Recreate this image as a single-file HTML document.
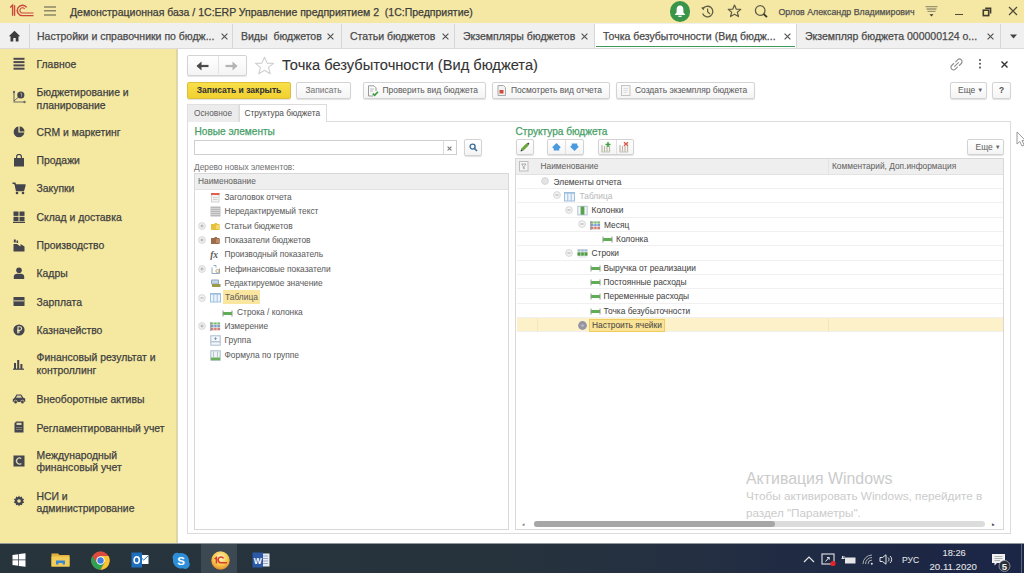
<!DOCTYPE html>
<html><head><meta charset="utf-8">
<style>
*{box-sizing:border-box}
html,body{margin:0;padding:0}
body{width:1024px;height:573px;position:relative;overflow:hidden;background:#fff;font-family:"Liberation Sans",sans-serif;color:#4a4a4a}
.a{position:absolute;white-space:nowrap}
body *{-webkit-text-stroke:0.05px currentColor}
.si,.tab,.ttl,.grn{-webkit-text-stroke:0.25px currentColor}
#tb{left:0;top:0;width:1024px;height:23px;background:#f5e8a4}
#tabs{left:0;top:23px;width:1024px;height:26px;background:#f0f0f0;border-bottom:1px solid #dadada}
.tab{top:24px;height:24px;border-right:1px solid #d6d6d6;font-size:10.5px;line-height:25px;color:#4a4a4a}
#side{left:0;top:49px;width:178px;height:494px;background:#f5e9a2;border-right:2px solid #dcd6a8}
.si{left:36.5px;font-size:10.4px;line-height:12.5px;color:#3f3f3f}

.btn{height:16.5px;border:1px solid #d3d3d3;border-radius:2px;background:linear-gradient(#ffffff,#f4f4f4);box-shadow:0 1px 1px rgba(0,0,0,.12);font-size:8.45px;line-height:14.5px;color:#606060}
.ybtn{background:linear-gradient(#f8df4a,#f1d030);border-color:#dcc038;color:#333;font-weight:bold}
.ftab{font-size:8.3px;line-height:16px;color:#666}

.grn{font-size:10.1px;line-height:12px;color:#47a066}
.tr{font-size:8.4px;line-height:14.35px;height:14.35px;color:#5e5e5e}
.tr *,.hd,.btn,.ftab{-webkit-text-stroke:0.05px currentColor}
.hd{font-size:8.35px;line-height:14.6px;color:#666}
.ex{width:6px;height:6px;border-radius:50%;border:1px solid #dcdcdc;background:#f6f6f6}
#rtree .tr{color:#474747}
#task{left:0;top:543px;width:1024px;height:30px;background:linear-gradient(90deg,#27343c 0%,#26333d 50%,#242f42 68%,#1f2a44 80%,#1b2546 100%);background-clip:padding-box;border-top:1px solid rgba(40,50,60,.5)}
</style></head><body>
<svg width="0" height="0" style="position:absolute">
<symbol id="ic-hdr" viewBox="0 0 11 11"><rect x="1.5" y="1.5" width="7.5" height="8.5" fill="#f3f3f3" stroke="#d2d2d2" stroke-width="1"/><rect x="1" y="1" width="8.5" height="2" fill="#e2604e"/><path d="M3 5.5H7.5M3 7.5H7.5" stroke="#c8c8c8" stroke-width=".8"/></symbol>
<symbol id="ic-txt" viewBox="0 0 11 11"><rect x="0.5" y="0.5" width="10" height="10" fill="#b9b9b9"/><path d="M0.5 2.5H10.5M0.5 4.5H10.5M0.5 6.5H10.5M0.5 8.5H10.5" stroke="#dcdcdc" stroke-width=".8"/></symbol>
<symbol id="ic-yel" viewBox="0 0 11 11"><path d="M1 3H4L5 2H7V3H9.5V9H1Z" fill="#e8c13c"/><rect x="6" y="4" width="4" height="4" fill="#f3d872"/></symbol>
<symbol id="ic-brn" viewBox="0 0 11 11"><path d="M1 3H4L5 2H7V3H9.5V9H1Z" fill="#9e6a4c"/><rect x="6" y="4" width="4" height="4" fill="#b98a6a"/></symbol>
<symbol id="ic-fx" viewBox="0 0 11 11"><text x="0.2" y="9" font-family="Liberation Serif" font-style="italic" font-weight="bold" font-size="9.5" fill="#5a5a5a">fx</text></symbol>
<symbol id="ic-nf" viewBox="0 0 11 11"><path d="M2 3.5V9.5H9.5V4.5" fill="none" stroke="#8fa9c2" stroke-width="1"/><path d="M3.5 1.5H6V3.5" fill="none" stroke="#8fa9c2" stroke-width="1"/><circle cx="7.5" cy="7" r="1.6" fill="none" stroke="#c0a060" stroke-width=".9"/></symbol>
<symbol id="ic-ed" viewBox="0 0 11 11"><rect x="1" y="1.5" width="8" height="5" rx="1" fill="#8da8c4"/><rect x="2" y="2.5" width="6" height="3" fill="#c7d6e6"/><rect x="2" y="6" width="8.5" height="3" fill="#9a9a4a"/></symbol>
<symbol id="ic-tbl" viewBox="0 0 11 11"><rect x="0.5" y="1.5" width="10" height="8.5" fill="#eef4fb" stroke="#9dbfdf" stroke-width="1"/><path d="M3.8 1.5V10M7.2 1.5V10" stroke="#9dbfdf" stroke-width="1"/><path d="M0.5 2H10.5" stroke="#9dbfdf" stroke-width="1.4"/></symbol>
<symbol id="ic-row" viewBox="0 0 11 11"><rect x="1" y="4" width="9" height="3" fill="#5fae55"/><path d="M1 2.5V8.5M10 2.5V8.5" stroke="#8a9a88" stroke-width="1"/></symbol>
<symbol id="ic-dim" viewBox="0 0 11 11"><rect x="0.5" y="1" width="10" height="9" fill="#eef0f4"/><rect x="1" y="1.5" width="9" height="2" fill="#7cba6a"/><rect x="1" y="4" width="9" height="2.2" fill="#7a9ed0"/><rect x="1" y="6.8" width="9" height="2.4" fill="#d87a70"/><path d="M3.8 1V10M7 1V10" stroke="#e8ecf0" stroke-width=".8"/><path d="M0.8 1V10" stroke="#8a8a90" stroke-width="1"/></symbol>
<symbol id="ic-grp" viewBox="0 0 11 11"><rect x="0.8" y="0.8" width="9.4" height="9.4" fill="#f4f7fa" stroke="#a9bccf" stroke-width="1"/><path d="M0.8 6.8H10.2" stroke="#a9bccf" stroke-width="1.2"/><path d="M5.5 2.3V5M4.2 3.6H6.8" stroke="#7890a8" stroke-width=".9"/></symbol>
<symbol id="ic-frm" viewBox="0 0 11 11"><rect x="0.8" y="0.8" width="9.4" height="9.4" fill="#eef3f6" stroke="#a9bccf" stroke-width="1"/><rect x="1" y="7.5" width="9" height="2.7" fill="#6cb05a"/><path d="M3.5 1.5V7.5M7.5 1.5V7.5" stroke="#b8c4cc" stroke-width="1"/></symbol>
<symbol id="ic-col" viewBox="0 0 11 11"><rect x="0.8" y="1.3" width="9.4" height="8.6" fill="#f2f5f9" stroke="#b4c4d6" stroke-width="1"/><rect x="3.6" y="1.5" width="3.8" height="8.2" fill="#5aa24a"/></symbol>
<symbol id="ic-rows" viewBox="0 0 11 11"><rect x="0.5" y="1.3" width="10" height="8.6" fill="#eef2f6"/><rect x="0.5" y="1.3" width="10" height="2.2" fill="#a8bcd0"/><rect x="0.5" y="4.3" width="10" height="3.4" fill="#4f9a40"/><path d="M3.8 1.3V9.9M7.2 1.3V9.9" stroke="#dfe6ee" stroke-width=".7"/></symbol>
<symbol id="ic-gear" viewBox="0 0 11 11"><circle cx="5.5" cy="5.5" r="4.4" fill="#9595a2"/><circle cx="5.5" cy="5.5" r="1.6" fill="#b4b4be"/></symbol>
<symbol id="exm" viewBox="0 0 8 8"><circle cx="4" cy="4" r="3.4" fill="#f3f3f3" stroke="#d4d4d4" stroke-width="0.9"/><path d="M2.3 4H5.7" stroke="#a8a8a8" stroke-width="0.9"/></symbol>
<symbol id="exp" viewBox="0 0 8 8"><circle cx="4" cy="4" r="3.4" fill="#f3f3f3" stroke="#d4d4d4" stroke-width="0.9"/><path d="M2.3 4H5.7M4 2.3V5.7" stroke="#a8a8a8" stroke-width="0.9"/></symbol>
<symbol id="exd" viewBox="0 0 8 8"><circle cx="4" cy="4" r="3.4" fill="#e4e4e4" stroke="#d4d4d4" stroke-width="0.9"/></symbol>
</svg>

<!-- title bar -->
<div class="a" id="tb"></div>
<div class="a ttl" style="left:70px;top:6px;font-size:10.5px;line-height:13px;color:#3c3c3c">Демонстрационная база / 1С:ERP Управление предприятием 2&nbsp; (1С:Предприятие)</div>

<svg class="a" style="left:8px;top:3px" width="28" height="16" viewBox="0 0 28 16">
<path d="M2.2 4.6L4.6 2.2V12.8" fill="none" stroke="#c9473b" stroke-width="1.4"/><path d="M6.6 2.2V12.8" stroke="#c9473b" stroke-width="1.3"/>
<path d="M18.7 4.4A5.2 5.2 0 1 0 14.4 12.6H25.5" fill="none" stroke="#c9473b" stroke-width="1.4"/>
<path d="M16.6 5.9A2.6 2.6 0 1 0 14.4 10H25.5" fill="none" stroke="#c9473b" stroke-width="1.1"/>
</svg>
<svg class="a" style="left:44px;top:6px" width="12" height="10" viewBox="0 0 12 10"><path d="M0 1H12M0 4.8H12M0 9H12" stroke="#8d8765" stroke-width="1.5"/></svg>
<div class="a" style="left:669.5px;top:1px;width:20.5px;height:20.5px;border-radius:50%;background:#3a944a"></div>
<svg class="a" style="left:673px;top:4px" width="14" height="15" viewBox="0 0 14 15"><path d="M7 1.5C4.6 1.5 3.6 3.4 3.6 5.6V8.6L1.6 11H12.4L10.4 8.6V5.6C10.4 3.4 9.4 1.5 7 1.5Z" fill="#fff"/><path d="M5.3 12.3H8.7" stroke="#fff" stroke-width="1.2"/></svg>
<svg class="a" style="left:700px;top:4px" width="15" height="15" viewBox="0 0 15 15"><path d="M2.8 5.2A5.3 5.3 0 1 1 2.6 9.5" fill="none" stroke="#625c45" stroke-width="1.3"/><path d="M1 3.8L3.6 6.3L4.6 2.8Z" fill="#625c45"/><path d="M7.6 4.5V7.8L10 10" fill="none" stroke="#625c45" stroke-width="1.2"/></svg>
<svg class="a" style="left:727px;top:4px" width="15" height="14" viewBox="0 0 15 14"><path d="M7.5 1L9.3 5.2L13.8 5.4L10.3 8.2L11.5 12.6L7.5 10.2L3.5 12.6L4.7 8.2L1.2 5.4L5.7 5.2Z" fill="none" stroke="#625c45" stroke-width="1.2" stroke-linejoin="round"/></svg>
<svg class="a" style="left:754px;top:4px" width="15" height="15" viewBox="0 0 15 15"><circle cx="6.2" cy="6.5" r="4.8" fill="none" stroke="#625c45" stroke-width="1.3"/><path d="M9.6 10L13 13.2" stroke="#3a3628" stroke-width="1.8"/></svg>
<div class="a ttl" style="left:778.5px;top:7px;font-size:8.8px;line-height:10px;color:#505050">Орлов Александр Владимирович</div>
<svg class="a" style="left:925px;top:5px" width="13" height="13" viewBox="0 0 13 13"><path d="M0.5 1.7H12.5M1.5 4H11.5M2.5 6.3H10.5" stroke="#9c9472" stroke-width="1.3"/><path d="M4.5 9.2H8.5L6.5 11.6Z" fill="#3a3628"/></svg>
<div class="a" style="left:955px;top:13.5px;width:8px;height:1.8px;background:#4f4a38"></div>
<svg class="a" style="left:981.5px;top:7px" width="10" height="10" viewBox="0 0 10 10"><rect x="1.3" y="3.2" width="5.4" height="5.4" fill="none" stroke="#3f3b2d" stroke-width="1.6"/><path d="M3.2 1.3H8.6V6.6" fill="none" stroke="#3f3b2d" stroke-width="1.5"/></svg>
<svg class="a" style="left:1008px;top:6px" width="10" height="10" viewBox="0 0 10 10"><path d="M1 1L9 9M9 1L1 9" stroke="#4f4a38" stroke-width="1.2"/></svg>
<!-- tabs -->
<div class="a" id="tabs"></div>
<div class="a tab" style="left:0;width:30px"></div>
<div class="a tab" style="left:30px;width:203px;padding-left:7px">Настройки и справочники по бюдж...</div>
<div class="a tab" style="left:233px;width:109px;padding-left:8px">Виды&nbsp; бюджетов</div>
<div class="a tab" style="left:342px;width:113px;padding-left:8px">Статьи бюджетов</div>
<div class="a tab" style="left:455px;width:140px;padding-left:8px">Экземпляры бюджетов</div>
<div class="a tab" style="left:595px;width:202px;padding-left:8px;background:#fff">Точка безубыточности (Вид бюдж...</div>
<div class="a tab" style="left:797px;width:204px;padding-left:8px">Экземпляр бюджета 000000124 о...</div>

<svg class="a" style="left:8px;top:30px" width="13" height="12" viewBox="0 0 13 12"><path d="M6.5 0.8L0.8 6.2H2.5V11.5H5.3V8H7.7V11.5H10.5V6.2H12.2Z" fill="#3c3c3c"/></svg>
<div class="a" style="left:596px;top:45.5px;width:199px;height:1.8px;background:#3e9a5a"></div>
<svg class="a" style="left:220px;top:32px" width="9" height="9" viewBox="0 0 9 9"><path d="M1.6 1.6L7.4 7.4M7.4 1.6L1.6 7.4" stroke="#505050" stroke-width="1.1"/></svg>
<svg class="a" style="left:326px;top:32px" width="9" height="9" viewBox="0 0 9 9"><path d="M1.6 1.6L7.4 7.4M7.4 1.6L1.6 7.4" stroke="#505050" stroke-width="1.1"/></svg>
<svg class="a" style="left:440.5px;top:32px" width="9" height="9" viewBox="0 0 9 9"><path d="M1.6 1.6L7.4 7.4M7.4 1.6L1.6 7.4" stroke="#505050" stroke-width="1.1"/></svg>
<svg class="a" style="left:580px;top:32px" width="9" height="9" viewBox="0 0 9 9"><path d="M1.6 1.6L7.4 7.4M7.4 1.6L1.6 7.4" stroke="#505050" stroke-width="1.1"/></svg>
<svg class="a" style="left:783px;top:32px" width="9" height="9" viewBox="0 0 9 9"><path d="M1.6 1.6L7.4 7.4M7.4 1.6L1.6 7.4" stroke="#505050" stroke-width="1.1"/></svg>
<svg class="a" style="left:986px;top:32px" width="9" height="9" viewBox="0 0 9 9"><path d="M1.6 1.6L7.4 7.4M7.4 1.6L1.6 7.4" stroke="#505050" stroke-width="1.1"/></svg>
<svg class="a" style="left:1009px;top:33px" width="9" height="7" viewBox="0 0 9 7"><path d="M1 1.5H8L4.5 5.5Z" fill="#444"/></svg>
<!-- sidebar -->
<div class="a" id="side"></div>
<div class="a si" style="top:58.5px">Главное</div>
<div class="a si" style="top:87.0px;line-height:12.5px">Бюджетирование и<br>планирование</div>
<div class="a si" style="top:126.8px">CRM и маркетинг</div>
<div class="a si" style="top:154.8px">Продажи</div>
<div class="a si" style="top:183.0px">Закупки</div>
<div class="a si" style="top:211.8px">Склад и доставка</div>
<div class="a si" style="top:240.0px">Производство</div>
<div class="a si" style="top:268.2px">Кадры</div>
<div class="a si" style="top:296.7px">Зарплата</div>
<div class="a si" style="top:325.0px">Казначейство</div>
<div class="a si" style="top:352.2px;line-height:12.5px">Финансовый результат и<br>контроллинг</div>
<div class="a si" style="top:394.4px">Внеоборотные активы</div>
<div class="a si" style="top:422.7px">Регламентированный учет</div>
<div class="a si" style="top:449.8px;line-height:12.5px">Международный<br>финансовый учет</div>
<div class="a si" style="top:490.7px;line-height:12.5px">НСИ и<br>администрирование</div>


<svg class="a" style="left:13px;top:57px" width="12" height="13" viewBox="0 0 12 13" fill="#4a4a50"><rect x="0.5" y="0.8" width="11" height="2"/><rect x="0.5" y="4.1" width="11" height="2"/><rect x="0.5" y="7.4" width="11" height="2"/><rect x="0.5" y="10.7" width="11" height="2"/></svg>
<svg class="a" style="left:12px;top:90px" width="14" height="14" viewBox="0 0 14 14"><path d="M2 2V12H12.5" fill="none" stroke="#6a6a66" stroke-width="1.1"/><path d="M2 11L6 7.5" stroke="#6a6a66" stroke-width="1"/><circle cx="2" cy="2" r="1.2" fill="#6a6a66"/><circle cx="12.5" cy="12" r="1.2" fill="#6a6a66"/><circle cx="8.8" cy="5" r="3.6" fill="#45454d"/><path d="M8.2 3.2H9.6V6.8" stroke="#b8b49a" stroke-width=".8" fill="none"/></svg>
<svg class="a" style="left:13px;top:126px" width="12" height="12" viewBox="0 0 12 12"><path d="M5.4 0.6A5.4 5.4 0 1 0 11.4 6.6H5.4Z" fill="#45454d"/><path d="M6.6 0.5A4.9 4.9 0 0 1 11.5 5.4H6.6Z" fill="#45454d"/></svg>
<svg class="a" style="left:13px;top:154px" width="12" height="13" viewBox="0 0 12 13"><rect x="1" y="4" width="10" height="8.5" fill="#45454d"/><path d="M3.6 5.5V2.8A2.4 2.4 0 0 1 8.4 2.8V5.5" fill="none" stroke="#45454d" stroke-width="1.2"/></svg>
<svg class="a" style="left:12px;top:182px" width="14" height="13" viewBox="0 0 14 13"><path d="M0.5 1.2H3L4.5 8.5H11.5L13 3H3.5" fill="#45454d" stroke="#45454d" stroke-width="1.4" stroke-linejoin="round"/><circle cx="5" cy="11" r="1.3" fill="#45454d"/><circle cx="11" cy="11" r="1.3" fill="#45454d"/></svg>
<svg class="a" style="left:13px;top:211px" width="12" height="12" viewBox="0 0 12 12" fill="#45454d"><rect x="0.5" y="0.5" width="5" height="4.4"/><rect x="6.5" y="0.5" width="5" height="4.4"/><rect x="0.5" y="5.8" width="5" height="4.4"/><rect x="6.5" y="5.8" width="5" height="4.4"/><rect x="0" y="10.8" width="12" height="1.2"/></svg>
<svg class="a" style="left:13px;top:239px" width="12" height="13" viewBox="0 0 12 13" fill="#45454d"><rect x="0.8" y="0.5" width="2" height="3"/><rect x="3.5" y="1.5" width="1.6" height="2.5"/><path d="M0.5 5H4L7.5 7.5V5L11.5 7.5V12.5H0.5Z"/></svg>
<svg class="a" style="left:13px;top:267px" width="12" height="12" viewBox="0 0 12 12" fill="#45454d"><circle cx="6" cy="3.3" r="2.8"/><path d="M0.8 12V9.5C0.8 7.8 2.5 6.8 4 6.8H8C9.5 6.8 11.2 7.8 11.2 9.5V12Z"/></svg>
<svg class="a" style="left:13px;top:296px" width="12" height="11" viewBox="0 0 12 11"><rect x="0.5" y="1" width="11" height="9" fill="#45454d"/><rect x="0.5" y="4" width="11" height="1.6" fill="#a8a48a"/></svg>
<svg class="a" style="left:13px;top:324px" width="12" height="12" viewBox="0 0 12 12"><circle cx="6" cy="6" r="5.6" fill="#45454d"/><path d="M5 9.5V2.8H6.8A1.8 1.8 0 0 1 6.8 6.4H4M4 8H7" fill="none" stroke="#e8e2b8" stroke-width="1.1"/></svg>
<svg class="a" style="left:13px;top:359px" width="12" height="11" viewBox="0 0 12 11" fill="#45454d"><rect x="1" y="4" width="2" height="6"/><rect x="4.2" y="1" width="2" height="9"/><rect x="7.4" y="5" width="2" height="5"/><rect x="0" y="9.6" width="11" height="1.2"/></svg>
<svg class="a" style="left:12px;top:393px" width="14" height="11" viewBox="0 0 14 11"><path d="M0.8 9V6.2L2.2 5.2L4.6 1.6H9.2L11.4 4.8L13.2 5.6V9Z" fill="#45454d"/><path d="M5.2 2.6H8.6L10 4.8H4Z" fill="#d8d2a8"/><circle cx="3.6" cy="9" r="1.8" fill="#45454d" stroke="#f0e4a4" stroke-width=".6"/><circle cx="10.4" cy="9" r="1.8" fill="#45454d" stroke="#f0e4a4" stroke-width=".6"/></svg>
<svg class="a" style="left:13px;top:421px" width="12" height="12" viewBox="0 0 12 12"><path d="M1.5 2.5L3 0.5H10.5V11.5H1.5Z" fill="#45454d"/><rect x="3.5" y="1.8" width="5" height="2.2" fill="#d8d2b0"/><path d="M3 6.5H9M3 8.5H9" stroke="#8a8878" stroke-width=".9"/></svg>
<svg class="a" style="left:13px;top:455px" width="12" height="12" viewBox="0 0 12 12"><rect x="0.5" y="0.5" width="11" height="11" fill="#45454d"/><path d="M8.3 3.6A3 3 0 1 0 8.3 8.4" fill="none" stroke="#d8d4b4" stroke-width="1.3"/></svg>
<svg class="a" style="left:13px;top:495.3px" width="12" height="12" viewBox="0 0 12 12"><path d="M6 0.5L7 2.2L9 1.5L9.2 3.4L11.2 4L10 5.8L11.2 7.6L9.3 8.4L9 10.3L7 9.8L6 11.5L5 9.8L3 10.3L2.8 8.4L0.8 7.6L2 5.8L0.8 4L2.8 3.4L3 1.5L5 2.2Z" fill="#45454d"/><circle cx="6" cy="6" r="1.8" fill="#f0e4a4"/></svg>
<!-- form header -->
<div class="a" style="left:178px;top:49px;width:846px;height:494px;background:#fff"></div>
<div class="a btn" style="left:187px;top:55px;width:60px;height:20.5px;box-shadow:0 1px 1px rgba(0,0,0,.1)"></div>
<div class="a" style="left:217.5px;top:56px;width:1px;height:18px;background:#e2e2e2"></div>
<svg class="a" style="left:195px;top:60px" width="16" height="12" viewBox="0 0 16 12"><path d="M2.5 6H13.5" stroke="#4a4a4a" stroke-width="2.2"/><path d="M1.5 6L6.5 1.5V10.5Z" fill="#4a4a4a"/></svg>
<svg class="a" style="left:223px;top:60px" width="16" height="12" viewBox="0 0 16 12"><path d="M2.5 6H13.5" stroke="#b4b4b4" stroke-width="2.2"/><path d="M14.5 6L9.5 1.5V10.5Z" fill="#b4b4b4"/></svg>
<svg class="a" style="left:254px;top:56px" width="21" height="19" viewBox="0 0 21 19"><path d="M10.5 1.2L13.1 7.1L19.5 7.4L14.5 11.4L16.2 17.7L10.5 14.2L4.8 17.7L6.5 11.4L1.5 7.4L7.9 7.1Z" fill="none" stroke="#cfcfcf" stroke-width="1.1" stroke-linejoin="round"/></svg>
<div class="a" style="left:282px;top:56px;font-size:14.66px;line-height:18px;color:#333;-webkit-text-stroke:0.1px #333">Точка безубыточности (Вид бюджета)</div>
<!-- toolbar -->
<div class="a btn ybtn" style="left:187px;top:81.5px;height:17px;line-height:15.5px;width:104px;text-align:center;font-size:8.55px">Записать и закрыть</div>
<div class="a btn" style="left:296px;top:81.5px;height:17px;line-height:15.5px;width:55px;text-align:center;color:#777">Записать</div>
<div class="a btn" style="left:363px;top:81.5px;height:17px;line-height:15.5px;width:123px;padding-left:18.5px">Проверить вид бюджета</div>
<div class="a btn" style="left:491.5px;top:81.5px;height:17px;line-height:15.5px;width:118.5px;padding-left:18.5px">Посмотреть вид отчета</div>
<div class="a btn" style="left:615.5px;top:81.5px;height:17px;line-height:15.5px;width:139.5px;padding-left:18.5px">Создать экземпляр бюджета</div>
<div class="a btn" style="left:950px;top:81.5px;height:17px;line-height:15.5px;width:37px;padding-left:7px">Еще <span style="font-size:5.5px;vertical-align:1px">▼</span></div>
<div class="a btn" style="left:992px;top:81.5px;height:17px;line-height:15.5px;width:19px;text-align:center;font-weight:bold;color:#555">?</div>
<!-- form tabs -->
<div class="a" style="left:187px;top:121px;width:824px;height:413px;border:1px solid #dcdcdc"></div>
<div class="a ftab" style="left:187px;top:104px;width:52px;height:17.5px;background:#ececec;border:1px solid #e0e0e0;border-bottom:none;padding-left:6px">Основное</div>
<div class="a ftab" style="left:238.5px;top:104px;width:88px;height:18px;background:#fff;border:1px solid #dcdcdc;border-bottom:none;padding-left:5px;color:#555">Структура бюджета</div>

<!-- left panel -->
<div class="a grn" style="left:194.5px;top:126px">Новые элементы</div>
<div class="a" style="left:194px;top:140px;width:263px;height:15px;border:1px solid #cfcfcf;background:#fff"></div>
<div class="a" style="left:443px;top:141px;width:1px;height:13px;background:#dadada"></div>
<svg class="a" style="left:447px;top:145.5px" width="5" height="5" viewBox="0 0 5 5"><path d="M0.6 0.6L4.4 4.4M4.4 0.6L0.6 4.4" stroke="#777" stroke-width="1.1"/></svg>
<div class="a btn" style="left:463.5px;top:139px;width:18.5px;height:16.5px"></div>
<svg class="a" style="left:469px;top:143px" width="9" height="9" viewBox="0 0 9 9"><circle cx="3.6" cy="3.6" r="2.5" fill="none" stroke="#3c6e9a" stroke-width="1.4"/><path d="M5.3 5.3L8 8" stroke="#3c6e9a" stroke-width="1.6"/></svg>
<div class="a" style="left:194px;top:161.5px;font-size:8.33px;line-height:11px;color:#777">Дерево новых элементов:</div>
<div class="a" style="left:194px;top:173px;width:315px;height:357px;border:1px solid #d8d8d8;background:#fff"></div>
<div class="a hd" style="left:195px;top:174px;width:313px;height:15.5px;background:#efefef;border-bottom:1px solid #e2e2e2;padding-left:3px">Наименование</div>
<div class="a" id="ltree" style="left:195px;top:190px;width:313px">
<div class="tr" style="position:relative"><svg class="a" style="left:15px;top:2px" width="11" height="11"><use href="#ic-hdr"/></svg><span class="a" style="left:29.5px;top:0">Заголовок отчета</span></div>
<div class="tr" style="position:relative"><svg class="a" style="left:15px;top:2px" width="11" height="11"><use href="#ic-txt"/></svg><span class="a" style="left:29.5px;top:0">Нередактируемый текст</span></div>
<div class="tr" style="position:relative"><svg class="a" style="left:2.6px;top:3.3px" width="8" height="8"><use href="#exp"/></svg><svg class="a" style="left:15px;top:2px" width="11" height="11"><use href="#ic-yel"/></svg><span class="a" style="left:29.5px;top:0">Статьи бюджетов</span></div>
<div class="tr" style="position:relative"><svg class="a" style="left:2.6px;top:3.3px" width="8" height="8"><use href="#exp"/></svg><svg class="a" style="left:15px;top:2px" width="11" height="11"><use href="#ic-brn"/></svg><span class="a" style="left:29.5px;top:0">Показатели бюджетов</span></div>
<div class="tr" style="position:relative"><svg class="a" style="left:15px;top:2px" width="11" height="11"><use href="#ic-fx"/></svg><span class="a" style="left:29.5px;top:0">Производный показатель</span></div>
<div class="tr" style="position:relative"><svg class="a" style="left:2.6px;top:3.3px" width="8" height="8"><use href="#exp"/></svg><svg class="a" style="left:15px;top:2px" width="11" height="11"><use href="#ic-nf"/></svg><span class="a" style="left:29.5px;top:0">Нефинансовые показатели</span></div>
<div class="tr" style="position:relative"><svg class="a" style="left:15px;top:2px" width="11" height="11"><use href="#ic-ed"/></svg><span class="a" style="left:29.5px;top:0">Редактируемое значение</span></div>
<div class="tr" style="position:relative"><svg class="a" style="left:2.6px;top:3.3px" width="8" height="8"><use href="#exm"/></svg><svg class="a" style="left:15px;top:2px" width="11" height="11"><use href="#ic-tbl"/></svg><span class="a" style="left:28px;top:0;background:#fbe6a0;padding:0 2px;line-height:14px">Таблица</span></div>
<div class="tr" style="position:relative"><svg class="a" style="left:27px;top:3px" width="11" height="11"><use href="#ic-row"/></svg><span class="a" style="left:42px;top:0">Строка / колонка</span></div>
<div class="tr" style="position:relative"><svg class="a" style="left:2.6px;top:3.3px" width="8" height="8"><use href="#exp"/></svg><svg class="a" style="left:15px;top:2px" width="11" height="11"><use href="#ic-dim"/></svg><span class="a" style="left:29.5px;top:0">Измерение</span></div>
<div class="tr" style="position:relative"><svg class="a" style="left:15px;top:2px" width="11" height="11"><use href="#ic-grp"/></svg><span class="a" style="left:29.5px;top:0">Группа</span></div>
<div class="tr" style="position:relative"><svg class="a" style="left:15px;top:2px" width="11" height="11"><use href="#ic-frm"/></svg><span class="a" style="left:29.5px;top:0">Формула по группе</span></div>
</div>

<!-- right panel -->
<div class="a grn" style="left:515.5px;top:126px">Структура бюджета</div>
<div class="a btn" style="left:515.5px;top:139px;width:18px;height:16px"></div>
<svg class="a" style="left:519px;top:141px" width="11" height="12" viewBox="0 0 11 12"><path d="M3.2 8.8L8.6 3.4" stroke="#6aa83a" stroke-width="3" stroke-linecap="butt"/><path d="M8 2.8L9.2 1.6L10.4 2.8L9.2 4" fill="#3a3a3a"/><path d="M1.6 10.4L2.2 8.1L3.9 9.8Z" fill="#333"/></svg>
<div class="a btn" style="left:547px;top:139px;width:37px;height:16px"></div>
<div class="a" style="left:565px;top:140px;width:1px;height:14px;background:#e0e0e0"></div>
<svg class="a" style="left:551px;top:142px" width="11" height="10" viewBox="0 0 11 10"><path d="M5.5 1L9.8 5.2L8.2 6.8V8.5H2.8V6.8L1.2 5.2Z" fill="#4a9ae0"/></svg>
<svg class="a" style="left:569px;top:142px" width="11" height="10" viewBox="0 0 11 10"><path d="M5.5 9L9.8 4.8L8.2 3.2V1.5H2.8V3.2L1.2 4.8Z" fill="#4a9ae0"/></svg>
<div class="a btn" style="left:597.5px;top:139px;width:36.5px;height:16px"></div>
<div class="a" style="left:615.5px;top:140px;width:1px;height:14px;background:#e0e0e0"></div>
<svg class="a" style="left:600px;top:141px" width="12" height="12" viewBox="0 0 12 12"><path d="M2 4V11M4.5 5V11M7 5V11M9.5 5V11" stroke="#b8bca8" stroke-width="1.2"/><path d="M1.5 11H10" stroke="#c8c8bc" stroke-width="1"/><path d="M8 1V6M5.5 3.5H10.5" stroke="#3aa040" stroke-width="1.5"/></svg>
<svg class="a" style="left:618px;top:141px" width="12" height="12" viewBox="0 0 12 12"><path d="M2 4V11M4.5 5V11M7 5V11M9.5 5V11" stroke="#c0b8ac" stroke-width="1.2"/><path d="M1.5 11H10" stroke="#c8c4bc" stroke-width="1"/><path d="M6 1.2L10 4.8M10 1.2L6 4.8" stroke="#d85a4a" stroke-width="1.5"/></svg>
<div class="a btn" style="left:966.5px;top:139px;width:37.5px;height:16px;padding-left:8px;color:#666">Еще <span style="font-size:5.5px;vertical-align:1px">▼</span></div>
<div class="a" style="left:515px;top:158px;width:489px;height:371.5px;border:1px solid #d8d8d8;background:#fff"></div>
<div class="a hd" style="left:516px;top:159px;width:487px;height:15.5px;background:#efefef;border-bottom:1px solid #e2e2e2"></div>
<div class="a" style="left:828px;top:159px;width:1px;height:15px;background:#e4e4e4"></div>
<svg class="a" style="left:519px;top:161px" width="10" height="11" viewBox="0 0 10 11"><rect x="0.5" y="0.5" width="8.5" height="9.5" fill="#f6f6f6" stroke="#bdbdbd"/><path d="M2.5 3H7L5.2 5.5V8L4.3 7.3V5.5Z" fill="none" stroke="#9a9a9a" stroke-width=".8"/></svg>
<div class="a hd" style="left:540.5px;top:159px">Наименование</div>
<div class="a hd" style="left:832px;top:159px">Комментарий, Доп.информация</div>
<div class="a" id="rtree" style="left:516.5px;top:174.7px;width:486px;--c:#4a4a4a">
<div class="tr" style="position:relative;border-bottom:1px solid #f0f0f0;"><svg class="a" style="left:24.0px;top:2.4px" width="8" height="8"><use href="#exd"/></svg><span class="a" style="left:37px;top:0">Элементы отчета</span></div>
<div class="tr" style="position:relative;border-bottom:1px solid #f0f0f0;"><svg class="a" style="left:36.5px;top:2.4px" width="8" height="8"><use href="#exm"/></svg><svg class="a" style="left:47.5px;top:2px" width="11" height="11"><use href="#ic-tbl"/></svg><span class="a" style="left:63px;top:0;color:#bbb">Таблица</span></div>
<div class="tr" style="position:relative;border-bottom:1px solid #f0f0f0;"><svg class="a" style="left:48.5px;top:2.4px" width="8" height="8"><use href="#exm"/></svg><svg class="a" style="left:60.5px;top:2px" width="11" height="11"><use href="#ic-col"/></svg><span class="a" style="left:75px;top:0">Колонки</span></div>
<div class="tr" style="position:relative;border-bottom:1px solid #f0f0f0;"><svg class="a" style="left:61.5px;top:2.4px" width="8" height="8"><use href="#exm"/></svg><svg class="a" style="left:73px;top:2px" width="11" height="11"><use href="#ic-dim"/></svg><span class="a" style="left:87.5px;top:0">Месяц</span></div>
<div class="tr" style="position:relative;border-bottom:1px solid #f0f0f0;"><svg class="a" style="left:85px;top:2px" width="11" height="11"><use href="#ic-row"/></svg><span class="a" style="left:99.5px;top:0">Колонка</span></div>
<div class="tr" style="position:relative;border-bottom:1px solid #f0f0f0;"><svg class="a" style="left:48.5px;top:2.4px" width="8" height="8"><use href="#exm"/></svg><svg class="a" style="left:60.5px;top:2px" width="11" height="11"><use href="#ic-rows"/></svg><span class="a" style="left:75px;top:0">Строки</span></div>
<div class="tr" style="position:relative;border-bottom:1px solid #f0f0f0;"><svg class="a" style="left:73px;top:2px" width="11" height="11"><use href="#ic-row"/></svg><span class="a" style="left:87px;top:0">Выручка от реализации</span></div>
<div class="tr" style="position:relative;border-bottom:1px solid #f0f0f0;"><svg class="a" style="left:73px;top:2px" width="11" height="11"><use href="#ic-row"/></svg><span class="a" style="left:87px;top:0">Постоянные расходы</span></div>
<div class="tr" style="position:relative;border-bottom:1px solid #f0f0f0;"><svg class="a" style="left:73px;top:2px" width="11" height="11"><use href="#ic-row"/></svg><span class="a" style="left:87px;top:0">Переменные расходы</span></div>
<div class="tr" style="position:relative;border-bottom:1px solid #f0f0f0;"><svg class="a" style="left:73px;top:2px" width="11" height="11"><use href="#ic-row"/></svg><span class="a" style="left:87px;top:0">Точка безубыточности</span></div>
<div class="tr" style="position:relative;border-bottom:1px solid #f0f0f0;background:#fcf1c9;"><div class="a" style="left:20px;top:0;width:1px;height:14px;background:#f3e6bd"></div><div class="a" style="left:311px;top:0;width:1px;height:14px;background:#f3e6bd"></div><svg class="a" style="left:60.5px;top:2px" width="11" height="11"><use href="#ic-gear"/></svg><span class="a" style="left:72px;background:#fbe396;border:1px solid #efcc62;padding:0 2px 0 2.5px;line-height:11px;top:1px">Настроить ячейки</span></div>
</div>

<!-- scrollbar -->
<div class="a" style="left:522px;top:521px;font-size:5px;line-height:6px;color:#888">◂</div>
<div class="a" style="left:533.5px;top:520.5px;width:451.5px;height:6px;border-radius:3px;background:#dcdcdc"></div>
<div class="a" style="left:533.5px;top:520.5px;width:241px;height:6px;border-radius:3px;background:#a6a6a6"></div>
<div class="a" style="left:992px;top:521px;font-size:5px;line-height:6px;color:#444">▸</div>

<!-- form header right icons -->
<svg class="a" style="left:948.5px;top:57px" width="15" height="15" viewBox="0 0 15 15"><path d="M6.6 4.8L8.6 2.8A2.6 2.6 0 0 1 12.3 6.5L10.3 8.5" fill="none" stroke="#8c8c8c" stroke-width="1.1" stroke-linecap="round"/><path d="M8.4 10.2L6.4 12.2A2.6 2.6 0 0 1 2.7 8.5L4.7 6.5" fill="none" stroke="#8c8c8c" stroke-width="1.1" stroke-linecap="round"/><path d="M5.6 9.4L9.4 5.6" stroke="#8c8c8c" stroke-width="1.1" stroke-linecap="round"/></svg>
<svg class="a" style="left:978px;top:57px" width="4" height="14" viewBox="0 0 4 14" fill="#5a5a5a"><circle cx="2" cy="3" r="1.05"/><circle cx="2" cy="6.8" r="1.05"/><circle cx="2" cy="10.6" r="1.05"/></svg>
<svg class="a" style="left:999.5px;top:60px" width="9" height="9" viewBox="0 0 9 9"><path d="M1.5 1.5L7.5 7.5M7.5 1.5L1.5 7.5" stroke="#333" stroke-width="1.4"/></svg>
<!-- toolbar icons -->
<svg class="a" style="left:367px;top:84.5px" width="12" height="12" viewBox="0 0 12 12"><path d="M1.5 0.8H7L9 2.8V6" fill="none" stroke="#9a9a9a" stroke-width="1"/><path d="M1.5 0.8V11H6" fill="none" stroke="#9a9a9a" stroke-width="1"/><path d="M3 4H7M3 6H6" stroke="#b0b0b0" stroke-width=".8"/><path d="M5.8 8.6L7.6 10.4L11 6.8" fill="none" stroke="#3a9a3a" stroke-width="1.6"/></svg>
<svg class="a" style="left:496.5px;top:85px" width="10" height="11" viewBox="0 0 10 11"><path d="M1 0.5H6.5L8.5 2.5V10.5H1Z" fill="#f2f2f2" stroke="#a8a8a8" stroke-width="1"/><rect x="2.5" y="5" width="4" height="3.5" fill="#d24a3a"/></svg>
<svg class="a" style="left:620.5px;top:85px" width="10" height="11" viewBox="0 0 10 11"><rect x="0.5" y="0.5" width="8.5" height="10" fill="#f6f6f6" stroke="#c4c4c4" stroke-width="1"/><path d="M2.5 3.5H7M2.5 5.5H7M2.5 7.5H6" stroke="#d8d8d8" stroke-width=".8"/></svg>
<!-- watermark -->
<div class="a" style="left:746px;top:469.5px;font-size:15.9px;line-height:17px;color:#cbcbcb;-webkit-text-stroke:0">Активация Windows</div>
<div class="a" style="left:746px;top:488.7px;font-size:11.75px;line-height:14px;color:#cbcbcb;-webkit-text-stroke:0">Чтобы активировать Windows, перейдите в</div>
<div class="a" style="left:746px;top:505.5px;font-size:11.7px;line-height:14px;color:#cbcbcb;-webkit-text-stroke:0">раздел "Параметры".</div>
<!-- cursor -->
<svg class="a" style="left:1016px;top:131px" width="9" height="16" viewBox="0 0 9 16"><path d="M1 1V13L3.8 10.5L6 15L8.2 14L6 9.6H9.5Z" fill="#fff" stroke="#999" stroke-width="1"/></svg>
<!-- taskbar -->
<div class="a" id="task"></div>

<div class="a" style="left:201px;top:544px;width:35.5px;height:29px;background:#3c4852"></div>
<svg class="a" style="left:12px;top:553px" width="14" height="14" viewBox="0 0 14 14" fill="#fff"><path d="M0.5 2L6.3 1.2V6.6H0.5Z"/><path d="M7 1.1L13.5 0.2V6.6H7Z"/><path d="M0.5 7.3H6.3V12.8L0.5 12Z"/><path d="M7 7.3H13.5V13.8L7 12.9Z"/></svg>
<svg class="a" style="left:51px;top:552px" width="19" height="15" viewBox="0 0 19 15"><path d="M0.5 1.5H7L8.5 3H18.5V14.5H0.5Z" fill="#e3b43c"/><rect x="0.5" y="4.5" width="18" height="10" fill="#f2cd58"/><path d="M5 8.5H14V12.5H11.5V11H7.5V12.5H5Z" fill="#3a88d0"/></svg>
<svg class="a" style="left:90.5px;top:550.5px" width="19" height="19" viewBox="0 0 19 19"><circle cx="9.5" cy="9.5" r="9.2" fill="#dd4b3c"/><path d="M9.5 9.5L1.5 14.1A9.2 9.2 0 0 1 1.5 4.9L5.5 11.8Z" fill="#2fa150"/><path d="M0.9 6.2A9.2 9.2 0 0 0 9.5 18.7L13.5 11.8L5.5 11.8Z" fill="#2fa150"/><path d="M9.5 18.7A9.2 9.2 0 0 0 17.5 5L9.5 5L13.5 11.8Z" fill="#f8c630"/><circle cx="9.5" cy="9.5" r="4.2" fill="#fff"/><circle cx="9.5" cy="9.5" r="3.2" fill="#3d7ee0"/></svg>
<svg class="a" style="left:131px;top:552px" width="18" height="16" viewBox="0 0 18 16"><rect x="8" y="3" width="9.5" height="9" fill="#fff"/><path d="M8 3.5L12.7 8L17.5 3.5" fill="none" stroke="#1f6fc0" stroke-width="1"/><rect x="0.5" y="0.5" width="10.5" height="15" fill="#1f6fc0"/><ellipse cx="5.7" cy="8" rx="2.6" ry="3.3" fill="none" stroke="#fff" stroke-width="1.6"/></svg>
<svg class="a" style="left:171.5px;top:551.5px" width="18" height="17" viewBox="0 0 18 17"><path d="M5 0.8A4.5 4.5 0 0 0 1 7.2A8 8 0 0 0 10.8 16.2A4.5 4.5 0 0 0 17 10A8 8 0 0 0 7.2 1.2A4.5 4.5 0 0 0 5 0.8Z" fill="#2e8ed8"/><text x="9" y="13" text-anchor="middle" font-family="Liberation Sans" font-weight="bold" font-size="11.5" fill="#fff">S</text></svg>
<svg class="a" style="left:210.5px;top:550.5px" width="19" height="19" viewBox="0 0 19 19"><defs><radialGradient id="g1c" cx="50%" cy="35%" r="65%"><stop offset="0" stop-color="#fff6c8"/><stop offset=".6" stop-color="#f6c84a"/><stop offset="1" stop-color="#e48a2a"/></radialGradient></defs><circle cx="9.5" cy="9.5" r="9.2" fill="url(#g1c)"/><path d="M3.6 8L5.4 6.6V12.5" fill="none" stroke="#d63a2a" stroke-width="1.5"/><path d="M12.5 7.4A2.9 2.9 0 1 0 10 11.8H16" fill="none" stroke="#d63a2a" stroke-width="1.6"/></svg>
<svg class="a" style="left:251.5px;top:552px" width="18" height="16" viewBox="0 0 18 16"><rect x="8" y="1.5" width="9.5" height="13" fill="#e8ecf4"/><path d="M10 4H16M10 6.5H16M10 9H16M10 11.5H16" stroke="#9aa8c4" stroke-width="1"/><rect x="0.5" y="0.5" width="10.5" height="15" fill="#2b5aa8"/><text x="5.8" y="11.5" text-anchor="middle" font-family="Liberation Sans" font-weight="bold" font-size="8.5" fill="#fff">W</text></svg>
<!-- tray -->
<svg class="a" style="left:803px;top:555px" width="12" height="8" viewBox="0 0 12 8"><path d="M1 7L6 2L11 7" fill="none" stroke="#e6e6e6" stroke-width="1.2"/></svg>
<svg class="a" style="left:821px;top:553px" width="16" height="14" viewBox="0 0 16 14"><rect x="1" y="1" width="12" height="10" fill="none" stroke="#e6e6e6" stroke-width="1.1"/><path d="M4.5 8.5L8 4.5M6 4.5H8.2V6.7" fill="none" stroke="#e6e6e6" stroke-width="1"/><circle cx="12" cy="10.5" r="2.6" fill="#e8202a"/></svg>
<svg class="a" style="left:841px;top:555px" width="15" height="9" viewBox="0 0 15 9"><rect x="4" y="2.5" width="10.5" height="6" fill="#e6e6e6"/><path d="M0.5 3.5H3.5M1.5 1V3.5M3 1V3.5" stroke="#e6e6e6" stroke-width="1"/></svg>
<svg class="a" style="left:862px;top:554px" width="12" height="11" viewBox="0 0 12 11"><path d="M1 10A9 9 0 0 1 10 1M3.5 10A6.5 6.5 0 0 1 10 3.5M6 10A4 4 0 0 1 10 6" fill="none" stroke="#a8acb0" stroke-width="1"/><circle cx="9.8" cy="9.8" r="1" fill="#e6e6e6"/></svg>
<svg class="a" style="left:879px;top:554px" width="15" height="11" viewBox="0 0 15 11"><path d="M1 3.5H3.5L7 0.8V10.2L3.5 7.5H1Z" fill="none" stroke="#e6e6e6" stroke-width="1"/><path d="M9 3.5A2.5 2.5 0 0 1 9 7.5M11 2A4.5 4.5 0 0 1 11 9" fill="none" stroke="#e6e6e6" stroke-width="1"/></svg>
<div class="a" style="left:902px;top:555px;font-size:8.5px;line-height:11px;color:#eaeaea">РУС</div>
<div class="a" style="left:942.5px;top:547.5px;font-size:9.3px;line-height:11px;color:#eaeaea">18:26</div>
<div class="a" style="left:929.5px;top:561px;font-size:9.65px;line-height:11px;color:#eaeaea">20.11.2020</div>
<svg class="a" style="left:991px;top:553px" width="22" height="20" viewBox="0 0 22 20"><path d="M1 1H14V10H6L3.5 12.5V10H1Z" fill="#f0f0f0"/><path d="M3.5 3.5H11.5M3.5 5.5H11.5M3.5 7.5H9" stroke="#9aa0a8" stroke-width=".8"/><circle cx="13.5" cy="13" r="5.5" fill="#2a3038" stroke="#9aa0a8" stroke-width=".8"/><text x="13.5" y="16.5" text-anchor="middle" font-family="Liberation Sans" font-weight="bold" font-size="9.5" fill="#f0f0f0">5</text></svg>
<div class="a" style="left:1021px;top:544px;width:1px;height:29px;background:#5a6478"></div>
</body></html>
